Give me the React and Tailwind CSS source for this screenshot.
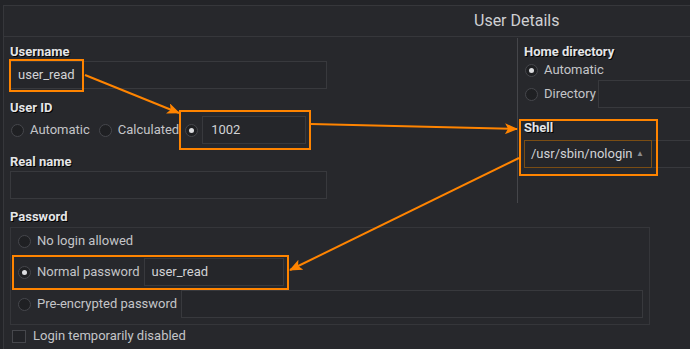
import React from "react";

function Radio({ checked, className = "" }) {
  return (
    <span className={"w-[13px] h-[13px] rounded-full border border-[#46474c] bg-[#1f2023] flex items-center justify-center shrink-0 " + className}>
      {checked && <span className="w-[5px] h-[5px] rounded-full bg-[#dcdde0]" />}
    </span>
  );
}

function RadioItem({ checked, label, className = "" }) {
  return (
    <span className={"flex items-center gap-[6px] " + className}>
      <Radio checked={checked} />
      <span className="text-[13px] text-[#c4c5c8]">{label}</span>
    </span>
  );
}

function Label({ children, className = "" }) {
  return (
    <div className={"h-[16px] leading-[16px] text-[13px] font-bold text-[#e4e5e7] [text-shadow:1px_1px_0_#000] " + className}>
      {children}
    </div>
  );
}

function Input({ value, className = "" }) {
  return (
    <div className={"h-[28px] border border-[#38393d] bg-[#25262a] flex items-center px-[7px] text-[13px] text-[#d2d3d6] " + className}>
      {value}
    </div>
  );
}

const O = "#ff8400";

export default function App() {
  return (
    <div className="w-[690px] h-[349px] overflow-hidden bg-[#232428] relative font-['Roboto',sans-serif] pt-[5px] pl-[3px]">
      <div className="w-[1030px] h-[400px] border-t border-l border-[#36373b] bg-[#27282c]">
        <div className="h-[31px] border-b border-[#36373b] pl-[470px] pt-[2px] leading-[26px] text-[16px] text-[#cfd0d3]">
          User Details
        </div>
        <div className="flex">
          <div className="w-[513px] pl-[6px] pt-[7px] flex flex-col">
            <Label>Username</Label>
            <Input value="user_read" className="w-[317px] mt-[1px]" />
            <Label className="mt-[11px]">User ID</Label>
            <div className="flex items-center h-[28px]">
              <RadioItem label="Automatic" className="ml-[1px]" />
              <RadioItem label="Calculated" className="ml-[9px]" />
              <Radio checked className="ml-[6px]" />
              <Input value="1002" className="w-[104px] ml-[4px] px-[8px]" />
            </div>
            <Label className="mt-[10px]">Real name</Label>
            <Input value="" className="w-[317px] mt-[1px]" />
            <Label className="mt-[10px]">Password</Label>
            <div className="mt-[2px] w-[640px] h-[98px] border border-[#35363a] pl-[7px] pr-[6px] flex flex-col">
              <div className="h-[26px] flex items-center">
                <RadioItem label="No login allowed" />
              </div>
              <div className="h-[28px] mt-[4px] flex items-center">
                <RadioItem checked label="Normal password" />
                <Input value="user_read" className="w-[140px] ml-[4px]" />
              </div>
              <div className="h-[28px] mt-[4px] flex items-center">
                <RadioItem label="Pre-encrypted password" />
                <Input value="" className="flex-1 ml-[4px]" />
              </div>
            </div>
            <div className="h-[16px] mt-[3px] flex items-center gap-[7px] pl-[2px]">
              <span className="w-[14px] h-[13px] border border-[#46474c] bg-[#222327]" />
              <span className="text-[13px] text-[#c4c5c8]">Login temporarily disabled</span>
            </div>
          </div>
          <div className="mt-[1px] h-[165px] border-l border-[#45464a] pl-[6px] pt-[6px] flex flex-col">
            <Label>Home directory</Label>
            <div className="h-[20px] flex items-center">
              <RadioItem checked label="Automatic" className="ml-[1px]" />
            </div>
            <div className="h-[28px] flex items-center">
              <RadioItem label="Directory" className="ml-[1px]" />
              <Input value="" className="w-[200px] ml-[2px]" />
            </div>
            <Label className="mt-[12px]">Shell</Label>
            <div className="mt-[4px] h-[28px] w-[200px] border border-[#38393d] bg-[#25262a]">
              <div className="h-[28px] w-[128px] -mt-px -ml-px border border-[#7a4d14] flex items-center pl-[6px] pr-[7px] text-[13px] text-[#d2d3d6]">
                <span className="flex-1">/usr/sbin/nologin</span>
                <span className="text-[8px] text-[#8a8b8f]">▲</span>
              </div>
            </div>
          </div>
        </div>
      </div>

      <div className="absolute left-[9px] top-[59px] w-[75px] h-[33px] border-2 border-[#ff8400]" />
      <div className="absolute left-[179px] top-[110px] w-[132px] h-[40px] border-2 border-[#ff8400]" />
      <div className="absolute left-[519px] top-[119px] w-[139px] h-[57px] border-2 border-[#ff8400]" />
      <div className="absolute left-[12px] top-[255px] w-[277px] h-[35px] border-2 border-[#ff8400]" />

      <svg className="absolute left-0 top-0" width="690" height="349" viewBox="0 0 690 349">
        <defs>
          <marker id="ah" markerWidth="13" markerHeight="11" refX="12" refY="5.5" orient="auto" markerUnits="userSpaceOnUse">
            <path d="M0,0 L13,5.5 L0,11 L3,5.5 Z" fill={O} />
          </marker>
        </defs>
        <line x1="85" y1="75" x2="179" y2="113" stroke={O} strokeWidth="2" markerEnd="url(#ah)" />
        <line x1="311" y1="124" x2="517" y2="129" stroke={O} strokeWidth="2" markerEnd="url(#ah)" />
        <line x1="519" y1="158" x2="290" y2="270" stroke={O} strokeWidth="2" markerEnd="url(#ah)" />
      </svg>
    </div>
  );
}
